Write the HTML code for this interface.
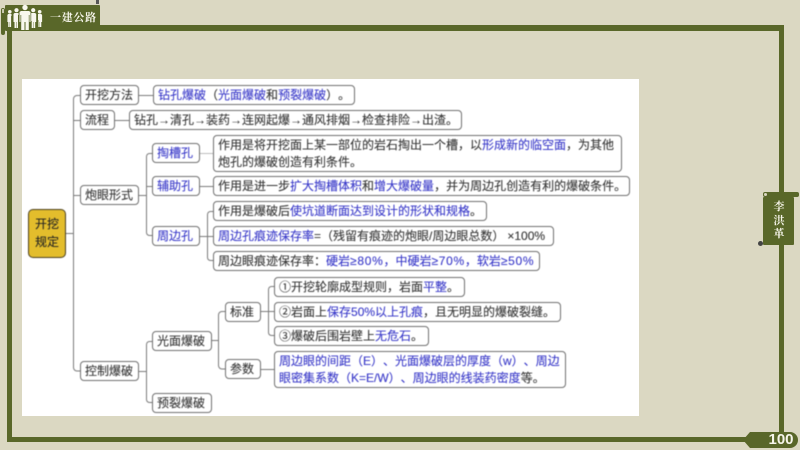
<!DOCTYPE html>
<html lang="zh">
<head>
<meta charset="utf-8">
<style>
html,body{margin:0;padding:0}
body{width:800px;height:450px;overflow:hidden;background:#dbd8c2;position:relative;font-family:"Liberation Sans","Noto Sans CJK SC",sans-serif;text-spacing-trim:space-all}
.g{position:absolute;background:#596729}
#panel{position:absolute;left:22px;top:79px;width:617px;height:337px;background:#fff}
#map{position:absolute;left:0;top:0;width:800px;height:450px;filter:blur(.45px)}
.n{position:absolute;box-sizing:border-box;border:1px solid #707070;border-radius:4px;background:#fff;color:#333;font-size:12px;line-height:17px;padding:0 0 0 4px;white-space:nowrap;-webkit-text-stroke:.1px currentColor}
.s{line-height:18px}
b{font-weight:400;color:#3636c8}
i{font-style:normal;letter-spacing:.7px}
svg{position:absolute;left:0;top:0}
.lbl{position:absolute;color:#f6f5ea;font-family:"Noto Serif CJK SC","Liberation Serif",serif;font-weight:700;filter:blur(.3px)}
</style>
</head>
<body>
<!-- frame -->
<div class="g" style="left:7px;top:26px;width:5px;height:412px"></div>
<div class="g" style="left:7px;top:25px;width:777px;height:6px"></div>
<div class="g" style="left:779px;top:25px;width:5px;height:168px"></div>
<div class="g" style="left:779px;top:244px;width:5px;height:196px"></div>
<div class="g" style="left:7px;top:437px;width:777px;height:5px"></div>
<div id="panel"></div>

<!-- header label -->
<div style="position:absolute;left:1px;top:8px;width:4px;height:27px;background:#596729;border-radius:2px"></div>
<div style="position:absolute;left:2px;top:9px;width:2px;height:4px;background:#c9c8b0"></div>
<div class="g" style="left:5px;top:5px;width:95px;height:26px;border-radius:1px"></div>
<div style="position:absolute;left:96px;top:0;width:3px;height:4px;background:#555"></div>
<svg width="110" height="35" viewBox="0 0 110 35" style="filter:blur(.25px)">
<g fill="#f8f7ee">
<circle cx="25" cy="7.500" r="2.700"/>
<path d="M21 11h8l1.500 1v10h-1v-7h-.7v15h-3.300v-8h-1v8h-3.300V15h-.7v7h-1V12z"/>
<circle cx="33.200" cy="10.200" r="2.100"/>
<path d="M31.200 13h4l1 1v8h-1v6h-1.700v-6h-.4v6h-1.400v-7h-.5z"/>
<circle cx="16.500" cy="10.200" r="2.100"/>
<path d="M14.500 13h4v2h-.5v13h-1.400v-6h-.4v6h-1.700v-6h-1v-8z"/>
<circle cx="39.700" cy="11.800" r="1.800"/>
<path d="M38 14h3.300l.8 1v7h-.8v5h-1.300v-5h-.3v5h-1.300v-7h-.4z"/>
<circle cx="9.800" cy="11.800" r="1.800"/>
<path d="M8.200 14h3.300v2h-.4v11H9.800v-5h-.3v5H8.200v-5h-.8v-7z"/>
</g>
</svg>
<div class="lbl" style="left:50px;top:10px;font-size:11px;line-height:15px;letter-spacing:.7px;white-space:nowrap">一建公路</div>

<!-- right tab -->
<div class="g" style="left:763px;top:192px;width:36px;height:5px;border-radius:2px"></div>
<div class="g" style="left:763px;top:197px;width:31px;height:48px;border-radius:1px"></div>
<div style="position:absolute;left:764px;top:193px;width:3px;height:3px;border-radius:50%;background:#dbd8c2"></div>
<div style="position:absolute;left:758px;top:241px;width:5px;height:5px;border-radius:50%;background:#444"></div>
<div class="lbl" style="left:771px;top:200px;width:16px;font-size:11px;line-height:13.500px;text-align:center">李<br>洪<br>革</div>

<!-- page badge -->
<svg width="800" height="450" viewBox="0 0 800 450">
<path d="M743 440L750 432H790a8 8 0 0 1 0 16H750z" fill="#596729"/>
</svg>
<div style="position:absolute;left:766px;top:432px;width:30px;font:700 15px/16px 'Liberation Sans',sans-serif;color:#f6f5ea;text-align:center">100</div>

<div id="map">
<svg width="800" height="450" viewBox="0 0 800 450" fill="none" stroke="#7a7a7a" stroke-width="1">
<path d="M66 233.500H73.500"/>
<path d="M80 95.500H77a3.500 3.500 0 0 0-3.500 3.500V367.500a3.500 3.500 0 0 0 3.500 3.500H80"/>
<path d="M73.500 120.500H80M73.500 195.500H80"/>
<path d="M139 95.500H153M115 120.500H129"/>
<path d="M139 195.500H146.500"/>
<path d="M152 153.500H149.500a3 3 0 0 0-3 3V232.500a3 3 0 0 0 3 3H152M146.500 186.500H152"/>
<path d="M200 153.500H213" stroke="#bdbdbd"/>
<path d="M200 186.500H213"/>
<path d="M200 236.500H207.500"/>
<path d="M213 211.500H210.500a3 3 0 0 0-3 3V257.500a3 3 0 0 0 3 3H213M207.500 236.500H213"/>
<path d="M139 371.500H146.500"/>
<path d="M152 341.500H149.500a3 3 0 0 0-3 3V399.500a3 3 0 0 0 3 3H152"/>
<path d="M212 340.500H218.500"/>
<path d="M225 311.500H222a3.500 3.500 0 0 0-3.500 3.500V365.500a3.500 3.500 0 0 0 3.500 3.500H225"/>
<path d="M261 311.500H268.500"/>
<path d="M274 286.500H271.500a3 3 0 0 0-3 3V332.500a3 3 0 0 0 3 3H274M268.500 311.500H274"/>
<path d="M261 369.500H274"/>
</svg>

<div class="n" style="left:28px;top:209px;width:38px;height:49px;background:#e3bd2c;border:1px solid #4a4020;border-radius:5px;padding:6px 0 0;text-align:center;line-height:17.500px;font-size:12px;color:#222">开挖<br>规定</div>

<div class="n s" style="left:80px;top:85px;width:59px;height:20px">开挖方法</div>
<div class="n s" style="left:153px;top:85px;width:202px;height:20px"><b>钻孔爆破</b>（<b>光面爆破</b>和<b>预裂爆破</b>）。</div>
<div class="n s" style="left:80px;top:110px;width:35px;height:20px">流程</div>
<div class="n s" style="left:129px;top:110px;width:333px;height:20px">钻孔→清孔→装药→连网起爆→通风排烟→检查排险→出渣。</div>

<div class="n s" style="left:80px;top:185px;width:59px;height:20px">炮眼形式</div>
<div class="n s" style="left:152px;top:143px;width:48px;height:20px"><b>掏槽孔</b></div>
<div class="n" style="left:213px;top:135px;width:409px;height:37px;padding-top:1px">作用是将开挖面上某一部位的岩石掏出一个槽，以<b>形成新的临空面</b>，为其他<br>炮孔的爆破创造有利条件。</div>
<div class="n s" style="left:152px;top:176px;width:48px;height:20px"><b>辅助孔</b></div>
<div class="n s" style="left:213px;top:176px;width:417px;height:20px">作用是进一步<b>扩大掏槽体积</b>和<b>增大爆破量</b>，并为周边孔创造有利的爆破条件。</div>
<div class="n s" style="left:213px;top:201px;width:274px;height:20px">作用是爆破后<b>使坑道断面达到设计的形状和规格</b>。</div>
<div class="n s" style="left:152px;top:226px;width:48px;height:20px"><b>周边孔</b></div>
<div class="n s" style="left:213px;top:226px;width:341px;height:20px"><b>周边孔痕迹保存率</b>=（残留有痕迹的炮眼/周边眼总数）<span style="margin-left:3px">×</span>100%</div>
<div class="n s" style="left:213px;top:251px;width:327px;height:20px">周边眼痕迹保存率：<b>硬岩<i>≥80%</i>，中硬岩<i>≥70%</i>，软岩<i>≥50%</i></b></div>

<div class="n s" style="left:80px;top:361px;width:59px;height:20px">控制爆破</div>
<div class="n s" style="left:152px;top:331px;width:60px;height:20px">光面爆破</div>
<div class="n s" style="left:152px;top:393px;width:60px;height:20px">预裂爆破</div>
<div class="n s" style="left:225px;top:302px;width:36px;height:20px">标准</div>
<div class="n s" style="left:225px;top:359px;width:36px;height:20px">参数</div>
<div class="n s" style="left:274px;top:277px;width:191px;height:20px">①开挖轮廓成型规则，岩面<b>平整</b>。</div>
<div class="n s" style="left:274px;top:302px;width:287px;height:20px">②岩面上<b>保存50%以上孔痕</b>，且无明显的爆破裂缝。</div>
<div class="n s" style="left:274px;top:326px;width:155px;height:20px">③爆破后围岩壁上<b>无危石</b>。</div>
<div class="n" style="left:274px;top:351px;width:292px;height:37px;padding-top:1px"><b>周边眼的间距（E）、光面爆破层的厚度（w）、周边<br>眼密集系数（K=E/W）、周边眼的线装药密度</b>等。</div>
</div>
</body>
</html>
